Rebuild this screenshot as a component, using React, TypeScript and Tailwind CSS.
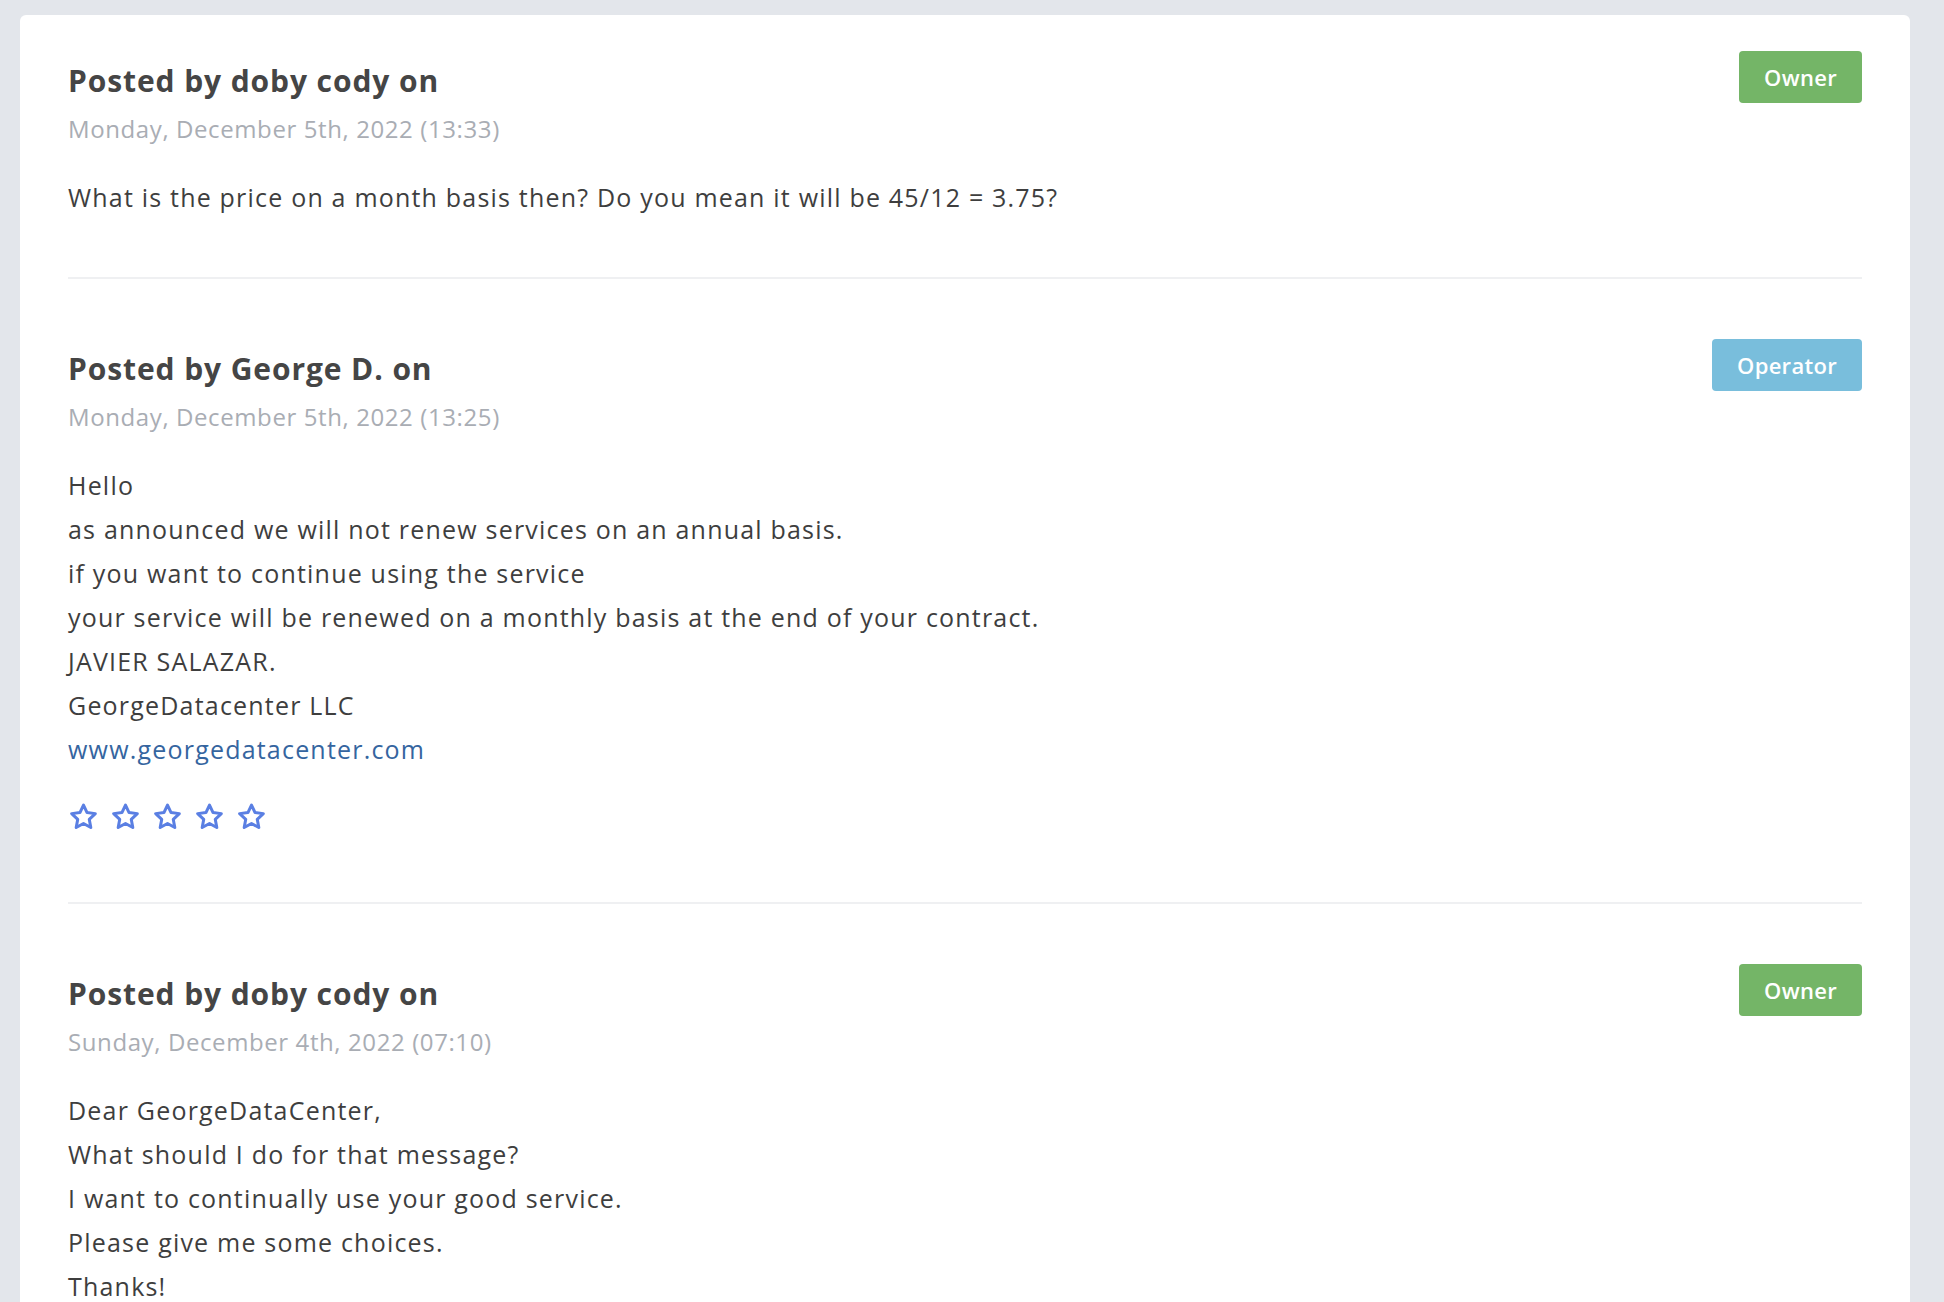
import { Fragment } from "react";

type Post = {
  author: string;
  date: string;
  role: "Owner" | "Operator";
  lines: string[];
  link?: string;
  stars?: boolean;
};

const posts: Post[] = [
  {
    author: "doby cody",
    date: "Monday, December 5th, 2022 (13:33)",
    role: "Owner",
    lines: ["What is the price on a month basis then? Do you mean it will be 45/12 = 3.75?"],
  },
  {
    author: "George D.",
    date: "Monday, December 5th, 2022 (13:25)",
    role: "Operator",
    lines: [
      "Hello",
      "as announced we will not renew services on an annual basis.",
      "if you want to continue using the service",
      "your service will be renewed on a monthly basis at the end of your contract.",
      "JAVIER SALAZAR.",
      "GeorgeDatacenter LLC",
    ],
    link: "www.georgedatacenter.com",
    stars: true,
  },
  {
    author: "doby cody",
    date: "Sunday, December 4th, 2022 (07:10)",
    role: "Owner",
    lines: [
      "Dear GeorgeDataCenter,",
      "What should I do for that message?",
      "I want to continually use your good service.",
      "Please give me some choices.",
      "Thanks!",
    ],
  },
];

function StarOutline() {
  return (
    <svg width="29" height="29" viewBox="0 0 24 24" fill="none">
      <path
        d="M12 2.5L14.94 8.76L21.8 9.62L16.76 14.35L18.05 21.13L12 17.8L5.95 21.13L7.24 14.35L2.2 9.62L9.06 8.76Z"
        stroke="#5a7fe3"
        strokeWidth="2.5"
        strokeLinejoin="round"
      />
    </svg>
  );
}

function RoleBadge({ role }: { role: Post["role"] }) {
  const color = role === "Owner" ? "bg-[#74b567]" : "bg-[#79bedc]";
  return (
    <span
      className={`${color} h-[52px] px-[25px] rounded-[4px] flex items-center text-white text-[22px] font-semibold tracking-[0.3px]`}
    >
      {role}
    </span>
  );
}

export default function App() {
  return (
    <div
      className="min-h-screen bg-[#e3e6eb] pl-5 pr-[34px] pt-[15px]"
      style={{ fontFamily: "'Open Sans', Lato, sans-serif" }}
    >
      <div className="bg-white rounded-md px-12 pt-9 pb-16">
        {posts.map((post, i) => (
          <Fragment key={i}>
            {i > 0 && <div className="h-[2px] bg-[#eff0f2]" />}
            <div
              className={`flex justify-between items-start ${i > 0 ? "pt-[60px]" : ""} ${post.stars ? "pb-[71px]" : "pb-[58px]"}`}
            >
              <div>
                <h3 className="mt-[12px] text-[30px] leading-[36px] font-bold text-[#454545] tracking-[0.9px]">
                  Posted by {post.author} on
                </h3>
                <div className="mt-[14px] text-[24px] leading-[32px] text-[#a9adb4] tracking-[0.6px]">
                  {post.date}
                </div>
                <div className="mt-[30px] text-[25px] leading-[44px] text-[#3e3e3e] tracking-[1.2px]">
                  {post.lines.map((line, j) => (
                    <div key={j}>{line}</div>
                  ))}
                  {post.link && (
                    <a href="#" className="text-[#35659f] block">
                      {post.link}
                    </a>
                  )}
                </div>
                {post.stars && (
                  <div className="mt-[31px] ml-[1px] flex gap-[13px]">
                    {[0, 1, 2, 3, 4].map((s) => (
                      <StarOutline key={s} />
                    ))}
                  </div>
                )}
              </div>
              <RoleBadge role={post.role} />
            </div>
          </Fragment>
        ))}
      </div>
    </div>
  );
}
